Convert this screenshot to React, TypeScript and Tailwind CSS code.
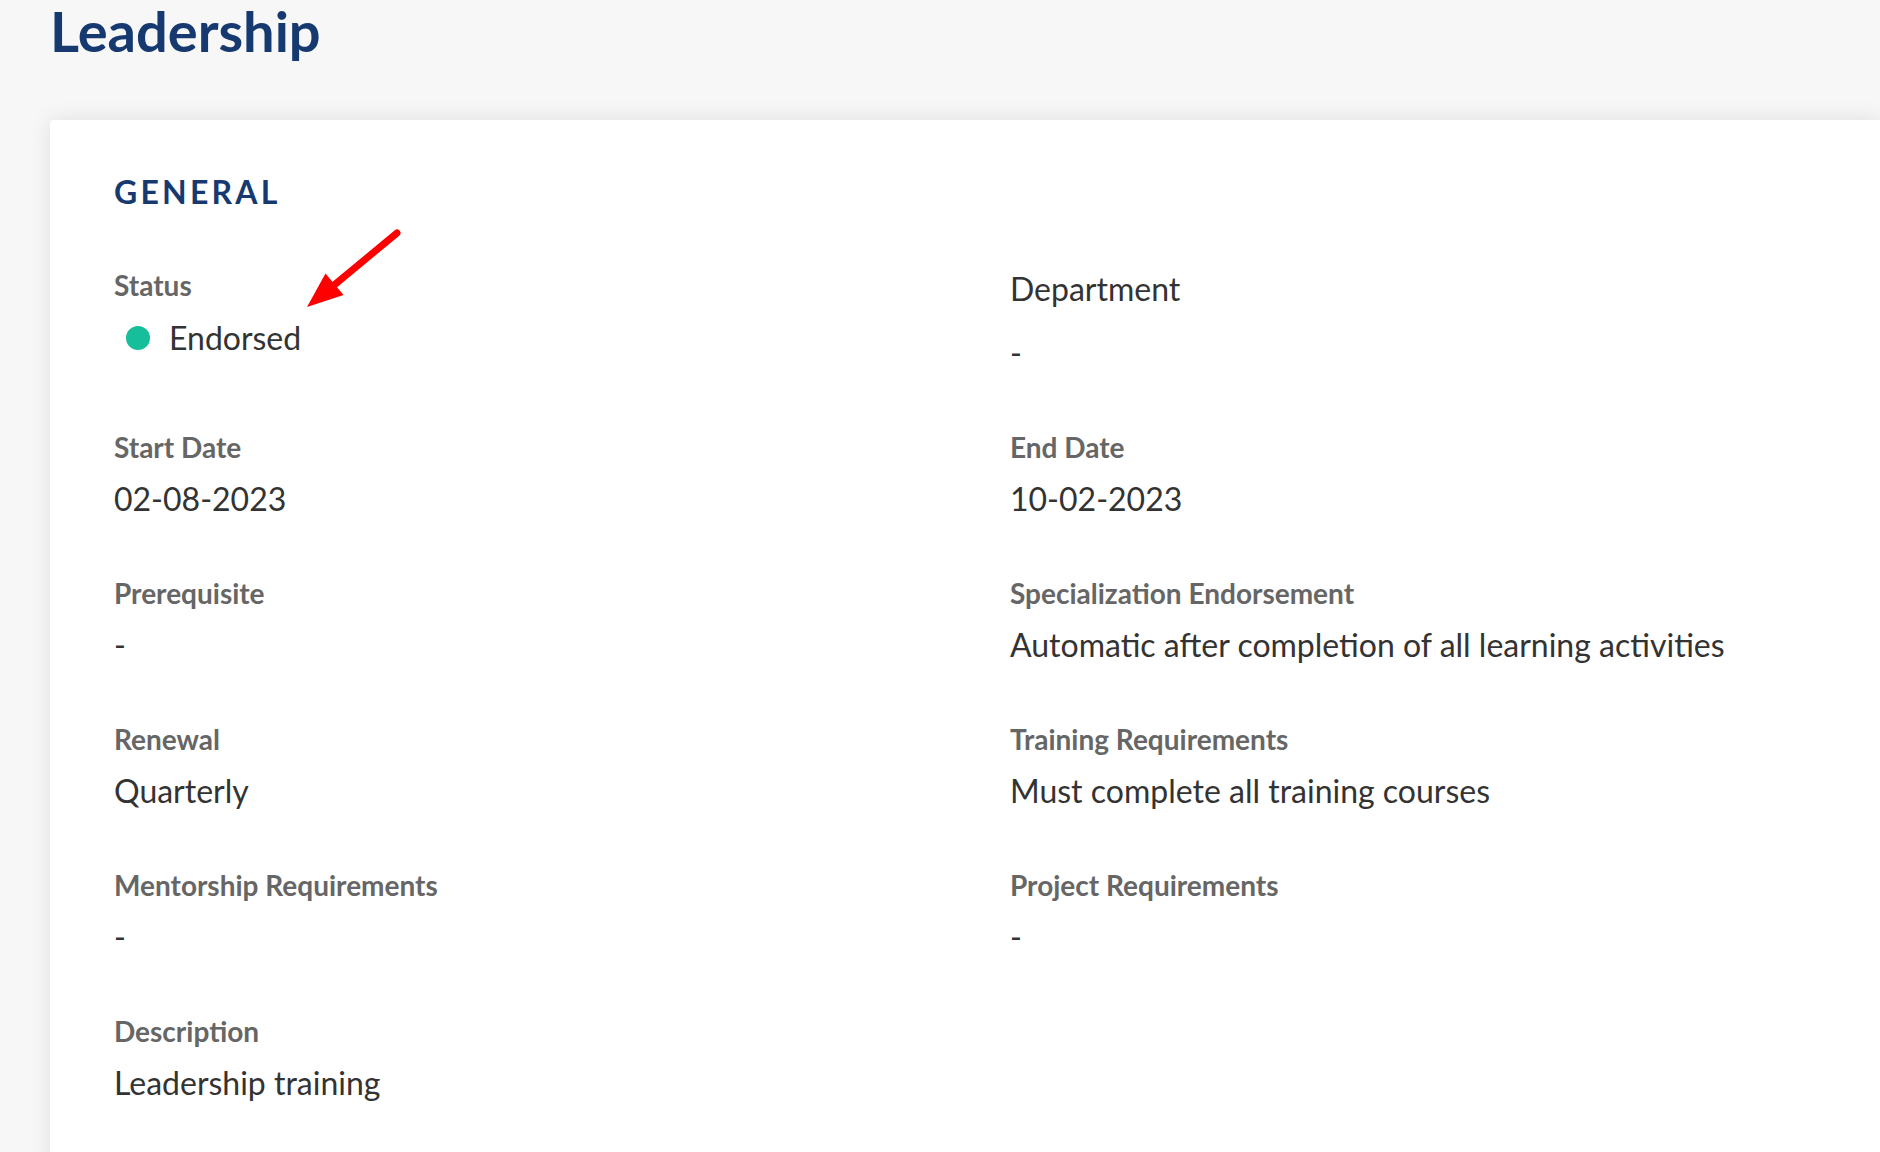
import React from "react";

const Label = ({ children }: { children: React.ReactNode }) => (
  <div className="text-[28px] leading-[34px] font-bold text-[#666666]">{children}</div>
);

const Value = ({ children, className = "" }: { children: React.ReactNode; className?: string }) => (
  <div className={`text-[32px] leading-[38px] text-[#333333] ${className}`}>{children}</div>
);

const Field = ({ label, value }: { label: string; value: string }) => (
  <div className="flex flex-col">
    <Label>{label}</Label>
    <Value className="mt-[16px]">{value}</Value>
  </div>
);

export default function App() {
  return (
    <div
      className="relative min-h-[1152px] w-full overflow-hidden bg-[#f7f7f7]"
      style={{ fontFamily: "Lato, 'Noto Sans', sans-serif" }}
    >
      <h1 className="pl-[50px] pt-[1px] text-[56px] leading-[60px] font-bold text-[#163a70]">Leadership</h1>
      <div className="ml-[50px] mt-[59px] rounded-tl-[4px] bg-white pl-[64px] pt-[56px] pb-[120px] shadow-[0_0_22px_rgba(0,0,0,0.10)]">
        <h2 className="text-[32px] leading-[32px] font-bold tracking-[0.1em] text-[#163a70]">GENERAL</h2>
        <div className="mt-[60px] grid grid-cols-[896px_1fr] gap-y-[58px]">
          <div className="flex flex-col">
            <Label>Status</Label>
            <div className="mt-[17px] flex items-center">
              <span className="ml-[12px] h-[24px] w-[24px] rounded-full bg-[#17be9b]" />
              <Value className="ml-[19px]">Endorsed</Value>
            </div>
          </div>
          <div className="flex flex-col pt-[2px]">
            <Value>Department</Value>
            <Value className="mt-[26px]">-</Value>
          </div>
          <Field label="Start Date" value="02-08-2023" />
          <Field label="End Date" value="10-02-2023" />
          <Field label="Prerequisite" value="-" />
          <Field label="Specialization Endorsement" value="Automatic after completion of all learning activities" />
          <Field label="Renewal" value="Quarterly" />
          <Field label="Training Requirements" value="Must complete all training courses" />
          <Field label="Mentorship Requirements" value="-" />
          <Field label="Project Requirements" value="-" />
          <Field label="Description" value="Leadership training" />
        </div>
      </div>
      <svg
        className="pointer-events-none absolute left-0 top-0"
        width="1880"
        height="1152"
        viewBox="0 0 1880 1152"
      >
        <line x1="397" y1="233" x2="333" y2="286" stroke="#ff0000" strokeWidth="7" strokeLinecap="round" />
        <polygon points="307,307 325.5,273.5 343.5,295" fill="#ff0000" />
      </svg>
    </div>
  );
}
